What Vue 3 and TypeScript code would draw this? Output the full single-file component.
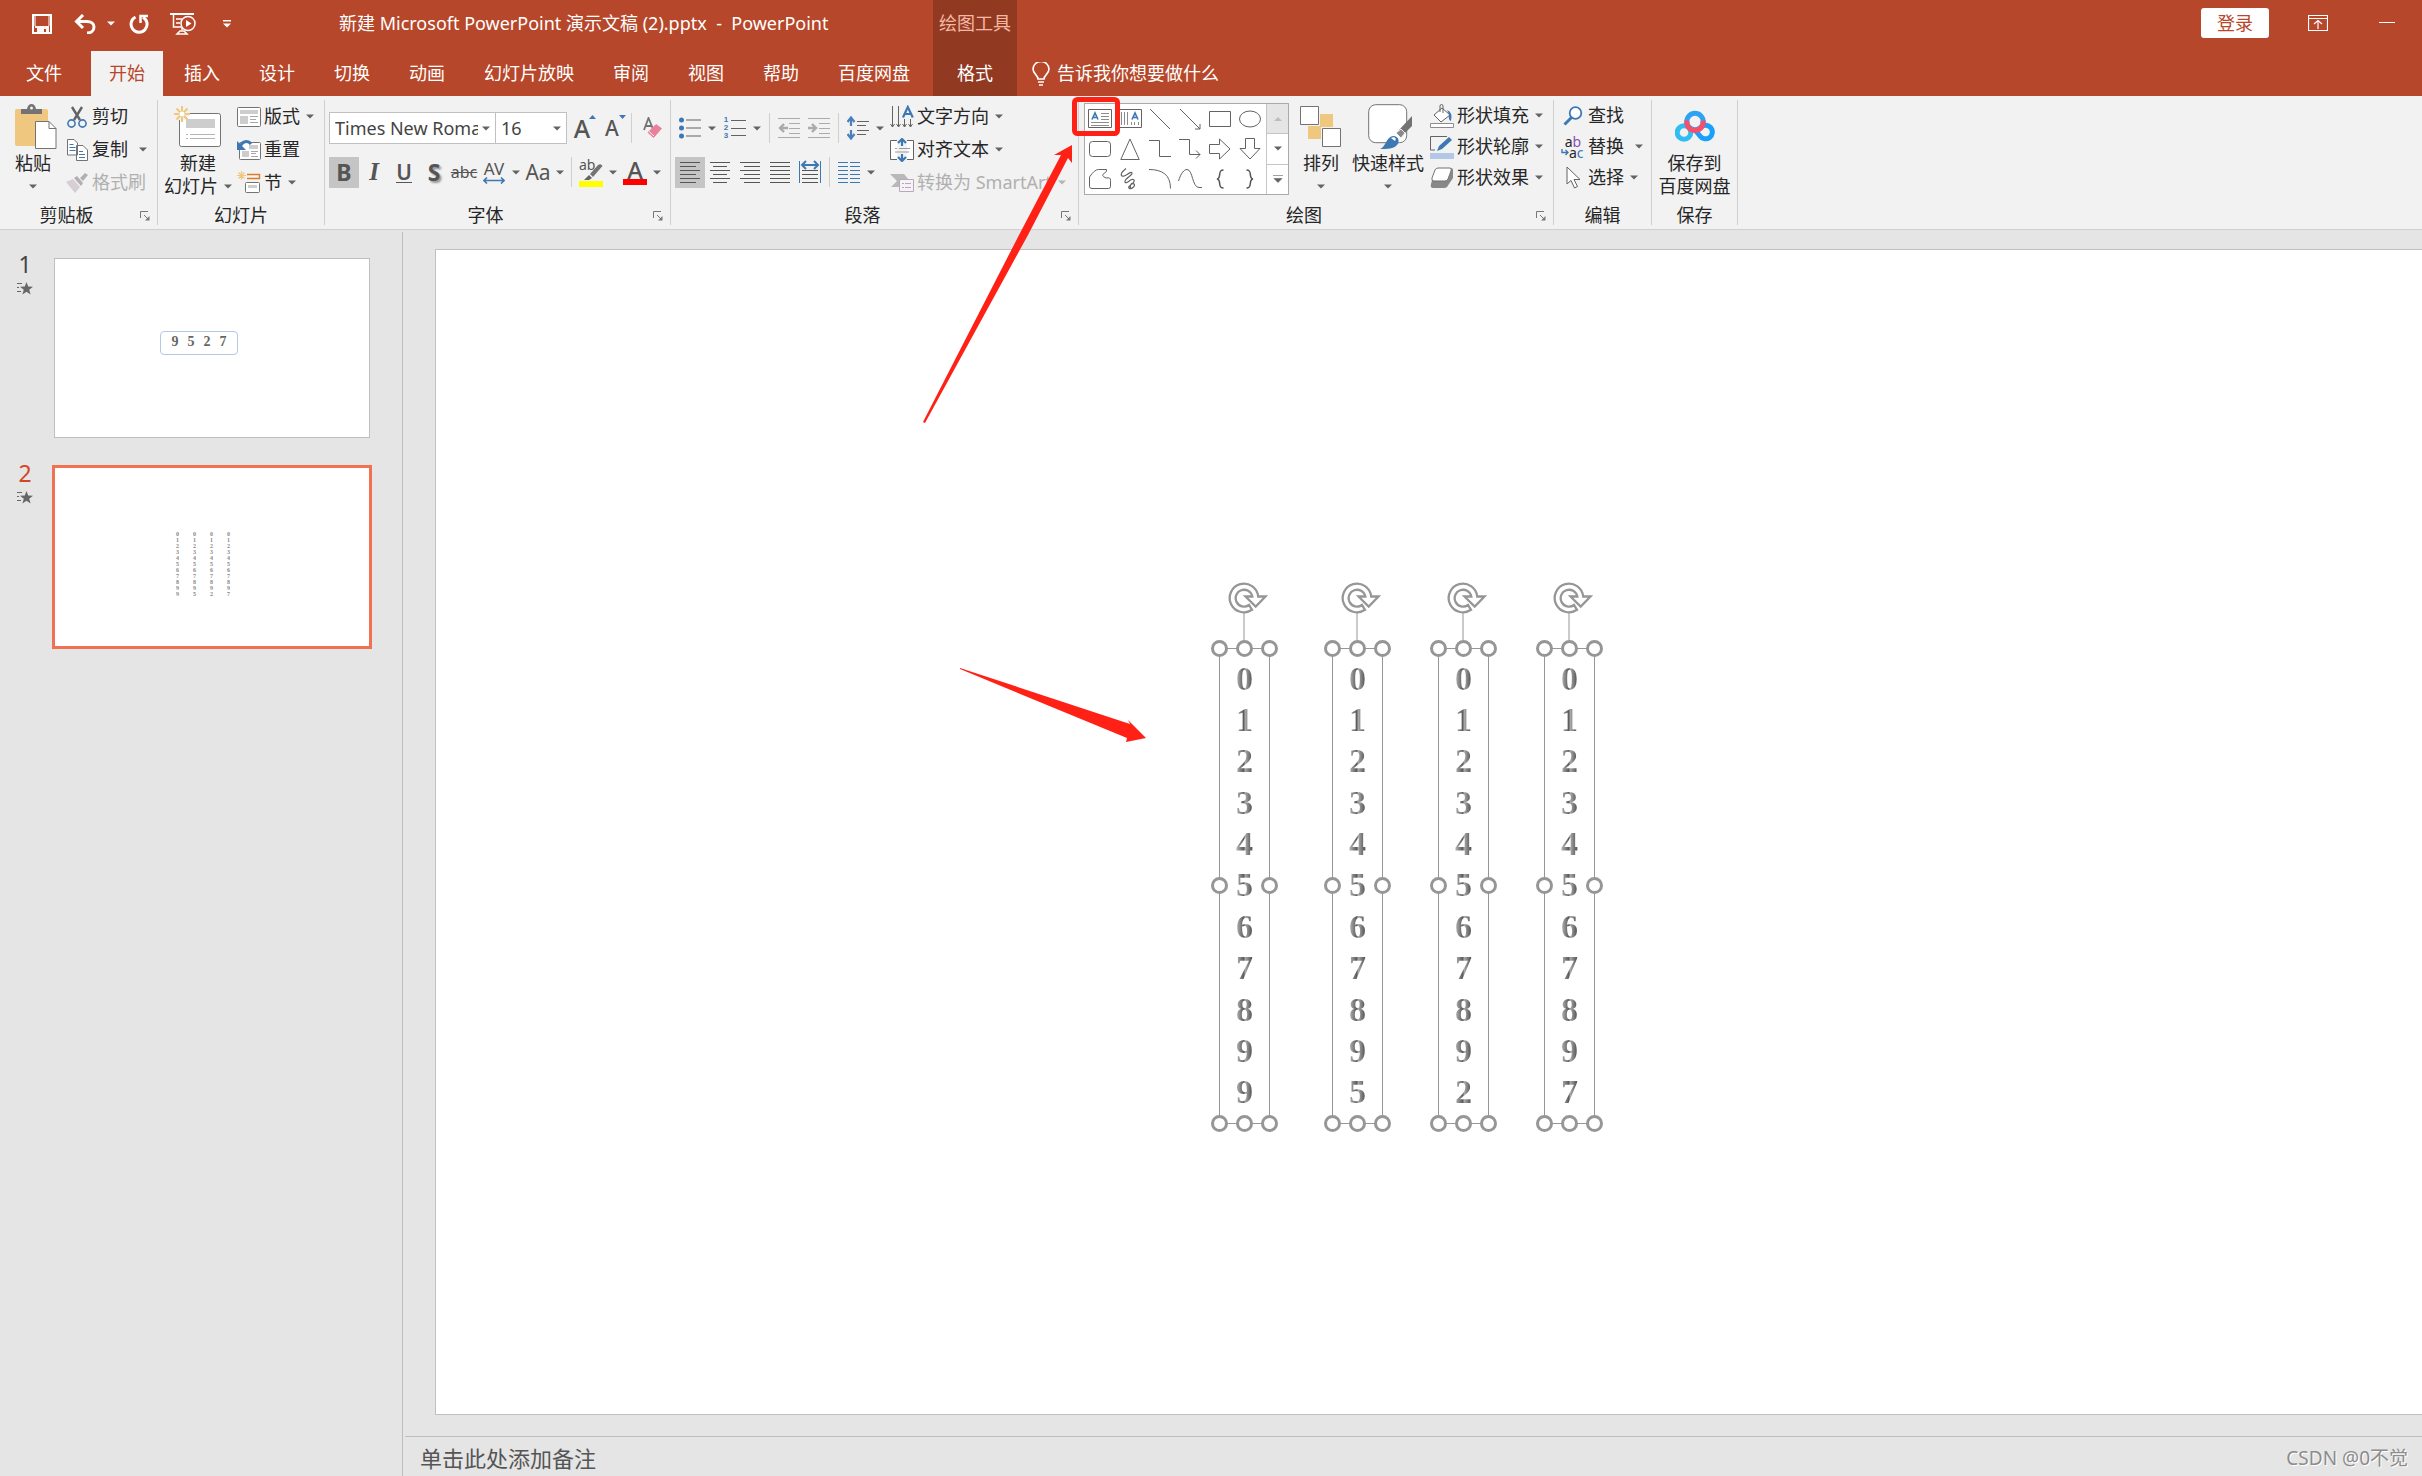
<script setup lang="ts">
import { h, ref } from 'vue'

interface DigitBox {
  left: number
  digits: string[]
}

const tabs = ['开始', '插入', '设计', '切换', '动画', '幻灯片放映', '审阅', '视图', '帮助', '百度网盘']
const activeTab = ref('开始')
const fontName = ref('Times New Roman')
const fontSize = ref('16')
const activeSlide = ref(2)

const base = ['0', '1', '2', '3', '4', '5', '6', '7', '8', '9']
const boxes: DigitBox[] = [
  { left: 783, digits: [...base, '9'] },
  { left: 896, digits: [...base, '5'] },
  { left: 1002, digits: [...base, '2'] },
  { left: 1108, digits: [...base, '7'] },
]
const handles = ['tl', 'tc', 'tr', 'ml', 'mr', 'bl', 'bc', 'br']

const Caret = (props: { color?: string }) =>
  h('svg', { width: 8, height: 5, viewBox: '0 0 8 5', 'aria-hidden': 'true', style: 'flex:none' }, [
    h('path', { d: 'M0 .5h8L4 4.5z', fill: props.color ?? '#636363' }),
  ])
Caret.props = ['color']

const Launcher = () =>
  h('svg', { width: 10, height: 10, viewBox: '0 0 10 10', fill: 'none', stroke: '#777', 'aria-hidden': 'true' }, [
    h('path', { d: 'M.5 7V.5H8M4 4l4 4' }),
    h('path', { d: 'M9.500 5v4.500H5z', fill: '#777', stroke: 'none' }),
  ])

const Star = () =>
  h('svg', { width: 16, height: 14, viewBox: '0 0 16 14', 'aria-hidden': 'true' }, [
    h('path', { d: 'M9.500 0l1.700 4.600 4.800.2-3.800 3 1.400 4.700-4.100-2.700-4.100 2.700 1.400-4.700-3.800-3 4.800-.2z', fill: '#666' }),
    h('path', { d: 'M0 1.500h5M0 5.500h2M0 9.500h4', stroke: '#666' }),
  ])
</script>

<template>
  <div class="app">
    <header class="header">
      <div class="title-row">
        <div class="qat">
          <button class="q q-save" aria-label="保存">
            <svg width="20" height="20" viewBox="0 0 20 20"><path d="M1 1h18v18H1z" fill="none" stroke="#fff" stroke-width="2" /><path d="M3 12h14v7h-3v-4h-2v4H5v-5H3z" fill="#fff" opacity=".95" /><path d="M2 1v11h2V2h12v10h2V1z" fill="#fff" opacity=".5" /></svg>
          </button>
          <button class="q q-undo" aria-label="撤消">
            <svg width="22" height="20" viewBox="0 0 22 20" fill="none" stroke="#fff" stroke-width="3"><path d="M9 1L2.500 7.500 9 14M3 7.500h10c4 0 7 2 7 5.500s-3 6-7 6" /></svg>
          </button>
          <button class="q q-drop" aria-label="撤消选项"><Caret color="#fff" /></button>
          <button class="q q-redo" aria-label="重复">
            <svg width="20" height="20" viewBox="0 0 20 20" fill="none" stroke="#fff" stroke-width="3"><path d="M6.500 3A8 8 0 1 0 14 3.200" /><path d="M11.500 9V2H19" stroke-width="2.500" /></svg>
          </button>
          <button class="q q-show" aria-label="从头开始">
            <svg width="26" height="22" viewBox="0 0 26 22" fill="none" stroke="#fff" stroke-width="1.500"><path d="M0 1h24" stroke-width="2" /><path d="M3.500 1v13H11M6 6h6M6 10h4M12 14v3M7 21l3-3h4l3 3z" /><circle cx="18" cy="10.500" r="7" /><path d="M16 7l5.500 3.500L16 14z" fill="#fff" stroke="none" /></svg>
          </button>
          <button class="q q-more" aria-label="自定义快速访问工具栏">
            <svg width="8" height="8" viewBox="0 0 8 8" fill="#fff"><path d="M0 0h8v1.500H0zM0 3.500h8l-4 4z" /></svg>
          </button>
        </div>
        <h1 class="doc-title">新建 Microsoft PowerPoint 演示文稿 (2).pptx &nbsp;-&nbsp; PowerPoint</h1>
        <div class="context-title">绘图工具</div>
        <div class="window-tools">
          <button class="login">登录</button>
          <button class="win-btn" aria-label="功能区显示选项">
            <svg width="20" height="16" viewBox="0 0 20 16" fill="none" stroke="#fff"><path d="M.5.5h19v15H.5zM.5 3.500h19M10 14V5.500M6 9l4-3.500L14 9" stroke-width="1.200" /></svg>
          </button>
          <button class="win-btn" aria-label="最小化"><svg width="16" height="2" viewBox="0 0 16 2"><path d="M0 .5h16" stroke="#fff" /></svg></button>
        </div>
      </div>
      <nav class="tabs">
        <button class="tab file">文件</button>
        <button v-for="t in tabs" :key="t" class="tab" :class="{ active: t === activeTab }" @click="activeTab = t">{{ t }}</button>
        <button class="tab format">格式</button>
        <label class="tell">
          <svg width="18" height="24" viewBox="0 0 18 24" fill="none" stroke="#fff" stroke-width="1.600"><path d="M6 17c0-4-5-5-5-10a7.500 7 0 0 1 16 0c0 5-5 6-5 10zM6 20h6M7 23h4" /></svg>
          <input type="text" placeholder="告诉我你想要做什么" aria-label="告诉我你想要做什么" />
        </label>
      </nav>
    </header>

    <div class="ribbon">
      <section class="group g-clip">
        <div class="body">
          <button class="big">
            <span class="pic">
              <svg width="42" height="46" viewBox="0 0 42 46"><path d="M2 5h29q2 0 2 2v33q0 2-2 2H2q-2 0-2-2V7q0-2 2-2z" fill="#efc77f" /><path d="M6 5h6q1-5 4.500-5T21 5h6v5H6z" fill="#737373" /><circle cx="16.500" cy="4" r="1.500" fill="#f2f2f2" /><path d="M20.500 17.500H34l7 7v20H20.500z" fill="#fff" stroke="#737373" /><path d="M34 17.500v7h7" fill="none" stroke="#737373" /></svg>
            </span>
            <span>粘贴</span><span class="ln"><Caret /></span>
          </button>
          <div class="list">
            <button class="cmd">
              <span class="ico"><svg width="20" height="22" viewBox="0 0 20 22" fill="none"><path d="M5 1l8 13M15 1L7 14" stroke="#636363" stroke-width="2.400" /><circle cx="4.500" cy="17.500" r="3.600" stroke="#3e78b3" stroke-width="1.600" /><circle cx="15.500" cy="17.500" r="3.600" stroke="#3e78b3" stroke-width="1.600" /></svg></span>剪切
            </button>
            <button class="cmd wide">
              <span class="ico"><svg width="21" height="22" viewBox="0 0 21 22" fill="#fff" stroke="#737373"><path d="M.5.5H7L10.500 4v12H.5zM9.500 6.500H16l4.500 4.500v10.500h-11z" /><path d="M2.500 5.500h4M2.500 8.500h6M2.500 11.500h6M12 12.500h4M12 15.500h6M12 18.500h6" stroke="#3e78b3" /></svg></span>复制<Caret />
            </button>
            <button class="cmd off" disabled>
              <span class="ico"><svg width="22" height="20" viewBox="0 0 22 20"><path d="M0 9l7-3 7 8-5 6z" fill="#d5ced5" /><path d="M8 5l3-2 6 7-2 3zM14 5l5-5 3 2-5 6z" fill="#b0b0b0" /></svg></span>格式刷
            </button>
          </div>
        </div>
        <footer class="foot"><span>剪贴板</span><button class="launch" aria-label="剪贴板选项"><Launcher /></button></footer>
      </section>

      <section class="group g-slides">
        <div class="body">
          <button class="big">
            <span class="pic">
              <svg width="48" height="42" viewBox="0 0 48 42"><rect x="5.500" y="7.500" width="41" height="33" rx="2" fill="#fff" stroke="#737373" /><path d="M12 13h29v9H12z" fill="#cdcdcd" /><path d="M12 28.500h2M16 28.500h25M12 32.500h2M16 32.500h25" stroke="#b5b5b5" /><circle cx="8" cy="8" r="6.500" fill="#f2f2f2" /><path d="M8 0v16M0 8h16M2.500 2.500l11 11M13.500 2.500l-11 11" stroke="#efc77f" stroke-width="2" /><circle cx="8" cy="8" r="2.500" fill="#fff" /></svg>
            </span>
            <span>新建</span><span class="ln">幻灯片<Caret /></span>
          </button>
          <div class="list">
            <button class="cmd">
              <span class="ico"><svg width="24" height="20" viewBox="0 0 24 20"><rect x=".5" y=".5" width="23" height="19" rx="1" fill="#fff" stroke="#737373" /><path d="M3 3h18v4H3zM3 9h8v8H3z" fill="#cdcdcd" /><path d="M13 9.500h8M13 12.500h6M13 15.500h8" stroke="#a8a8a8" /></svg></span>版式<Caret />
            </button>
            <button class="cmd">
              <span class="ico"><svg width="24" height="20" viewBox="0 0 24 20"><rect x="2.500" y="2.500" width="21" height="17" rx="1" fill="#fff" stroke="#737373" /><path d="M12 5h9v4h-9zM5 11h7v6H5z" fill="#cdcdcd" /><path d="M14 11.500h7M14 13.500h5M14 16.500h7" stroke="#a8a8a8" /><path d="M3 7C5 1 11 0 14 4" fill="none" stroke="#3e78b3" stroke-width="3" /><path d="M0 1v9h9z" fill="#3e78b3" /></svg></span>重置
            </button>
            <button class="cmd">
              <span class="ico"><svg width="24" height="23" viewBox="0 0 24 23" fill="none"><path d="M4.500 0v9M0 4.500h9M1.500 1.500l6 6M7.500 1.500l-6 6" stroke="#efc77f" stroke-width="1.200" /><path d="M10 3.500h12.500v4H10" stroke="#e07b28" stroke-width="1.400" /><rect x="8.500" y="11.500" width="14" height="10" rx="1" fill="#fff" stroke="#737373" /><path d="M11 14h9v3h-9z" fill="#cdcdcd" /></svg></span>节<Caret />
            </button>
          </div>
        </div>
        <footer class="foot"><span>幻灯片</span></footer>
      </section>

      <section class="group g-font">
        <div class="body rows">
          <div class="row">
            <label class="combo name"><select v-model="fontName" aria-label="字体"><option>Times New Roman</option><option>Arial</option></select><Caret /></label>
            <label class="combo size"><select v-model="fontSize" aria-label="字号"><option>16</option><option>18</option></select><Caret /></label>
            <button class="tool" aria-label="增大字号"><span class="ga">A</span><svg class="mark" width="7" height="4" viewBox="0 0 7 4"><path d="M0 4h7L3.500 0z" fill="#3e78b3" /></svg></button>
            <button class="tool" aria-label="减小字号"><span class="sa">A</span><svg class="mark" width="7" height="4" viewBox="0 0 7 4"><path d="M0 0h7L3.500 4z" fill="#3e78b3" /></svg></button>
            <i class="sep"></i>
            <button class="tool clear" aria-label="清除所有格式">
              <svg width="20" height="22" viewBox="0 0 20 22"><path d="M1 13L5.500 1 10 12M2.500 9h6" fill="none" stroke="#737373" stroke-width="1.800" /><path d="M13 7.500l5.500 4-8 9-5.500-5z" fill="#e8829b" stroke="#e8829b" stroke-linejoin="round" /><path d="M6 14.500l5 4.500" stroke="#f2f2f2" /></svg>
            </button>
          </div>
          <div class="row">
            <button class="tool on"><b class="fb">B</b></button>
            <button class="tool"><span class="fi">I</span></button>
            <button class="tool"><span class="fu">U</span></button>
            <button class="tool"><b class="fs">S</b></button>
            <button class="tool"><s class="fx">abc</s></button>
            <button class="tool split"><span class="half av">AV<svg width="22" height="7" viewBox="0 0 22 7" fill="none" stroke="#3e78b3" stroke-width="1.600"><path d="M1 3.500h20M4 .5l-3 3 3 3M18 .5l3 3-3 3" /></svg></span><Caret /></button>
            <button class="tool split"><span class="half aa">Aa</span><Caret /></button>
            <i class="sep"></i>
            <button class="tool split" aria-label="文本突出显示颜色">
              <span class="half hl"><span class="ab">ab</span><svg width="24" height="24" viewBox="0 0 24 24"><path d="M11 11l8-9q3-2 4.500 1L14 14z" fill="#737373" /><path d="M10 12l3 3-3 2H5z" fill="#636363" /><path d="M0 18h24v6H0z" fill="#ff0" /></svg></span><Caret />
            </button>
            <button class="tool split"><span class="half fc">A</span><Caret /></button>
          </div>
        </div>
        <footer class="foot"><span>字体</span><button class="launch" aria-label="字体选项"><Launcher /></button></footer>
      </section>

      <section class="group g-para">
        <div class="body">
          <div class="rows">
            <div class="row">
              <button class="tool split" aria-label="项目符号"><span class="half"><svg width="22" height="22" viewBox="0 0 22 22"><g fill="#3e78b3"><circle cx="2.500" cy="3" r="2.500" /><circle cx="2.500" cy="11" r="2.500" /><circle cx="2.500" cy="19" r="2.500" /></g><path d="M7 3h15M7 11h15M7 19h15" stroke="#636363" /></svg></span><Caret /></button>
              <button class="tool split" aria-label="编号"><span class="half nums"><span class="n"><span>1</span><span>2</span><span>3</span></span><svg width="15" height="22" viewBox="0 0 15 22"><path d="M0 3.500h15M0 11.500h15M0 18.500h15" stroke="#636363" /></svg></span><Caret /></button>
              <i class="sep"></i>
              <button class="tool" disabled aria-label="降低列表级别"><svg width="22" height="22" viewBox="0 0 22 22" fill="none" stroke="#ababab"><path d="M0 1.500h22M11 6.500h11M11 11.500h11M11 16.500h11M0 20.500h22" /><path d="M10 11H2M6 7l-4 4 4 4" stroke-width="2.400" /></svg></button>
              <button class="tool" disabled aria-label="提高列表级别"><svg width="22" height="22" viewBox="0 0 22 22" fill="none" stroke="#ababab"><path d="M0 1.500h22M11 6.500h11M11 11.500h11M11 16.500h11M0 20.500h22" /><path d="M0 11h8M4 7l4 4-4 4" stroke-width="2.400" /></svg></button>
              <i class="sep"></i>
              <button class="tool split" aria-label="行距"><span class="half"><svg width="22" height="24" viewBox="0 0 22 24" fill="none"><path d="M4 3v7M4 14v7M.5 6L4 1.500 7.500 6M.5 18L4 22.500 7.500 18" stroke="#4a7ebf" stroke-width="2.200" /><path d="M10 5.500h12M10 9.500h9M10 14.500h12M10 18.500h9" stroke="#636363" /></svg></span><Caret /></button>
            </div>
            <div class="row">
              <button class="tool on" aria-label="左对齐"><svg width="20" height="22" viewBox="0 0 20 22" stroke="#555"><path d="M0 1.500h20M0 5.500h16M0 9.500h20M0 13.500h16M0 17.500h20M0 21.500h16" /></svg></button>
              <button class="tool" aria-label="居中"><svg width="20" height="22" viewBox="0 0 20 22" stroke="#555"><path d="M0 1.500h20M3 5.500h14M0 9.500h20M3 13.500h14M0 17.500h20M3 21.500h14" /></svg></button>
              <button class="tool" aria-label="右对齐"><svg width="20" height="22" viewBox="0 0 20 22" stroke="#555"><path d="M0 1.500h20M4 5.500h16M0 9.500h20M4 13.500h16M0 17.500h20M4 21.500h16" /></svg></button>
              <button class="tool" aria-label="两端对齐"><svg width="20" height="22" viewBox="0 0 20 22" stroke="#555"><path d="M0 1.500h20M0 5.500h20M0 9.500h20M0 13.500h20M0 17.500h20M0 21.500h20" /></svg></button>
              <button class="tool" aria-label="分散对齐"><svg width="22" height="24" viewBox="0 0 22 24" fill="none"><path d="M.5 1v22M21.500 1v22" stroke="#3e78b3" /><path d="M3 5h16M7 1L3 5l4 4M15 1l4 4-4 4" stroke="#3e78b3" stroke-width="2" /><path d="M3 10.500h16M3 14.500h16M3 18.500h16M3 22.500h16" stroke="#555" /></svg></button>
              <i class="sep"></i>
              <button class="tool split" aria-label="分栏"><span class="half"><svg width="22" height="22" viewBox="0 0 22 22" stroke="#3e78b3"><path d="M0 1.500h10M12 1.500h10M0 5.500h10M12 5.500h10M0 9.500h10M12 9.500h10M0 13.500h10M12 13.500h10M0 17.500h10M12 17.500h10M0 21.500h10M12 21.500h10" /></svg></span><Caret /></button>
            </div>
          </div>
          <div class="list">
            <button class="cmd">
              <span class="ico"><svg width="24" height="24" viewBox="0 0 24 24" fill="none" stroke="#636363"><path d="M2.500 1v21M8.500 1v21M14.500 14v8M20.500 14v8M.5 19l2 3 2-3M6.500 19l2 3 2-3M12.500 19l2 3 2-3M18.500 19l2 3 2-3" /><path d="M13 12.500L17.800 2l5 10.500M15 9h6" stroke="#3e78b3" stroke-width="2.200" /></svg></span>文字方向<Caret />
            </button>
            <button class="cmd">
              <span class="ico"><svg width="24" height="24" viewBox="0 0 24 24" fill="none"><path d="M7 2.500H.5v19H7M17 2.500h6.500v19H17" fill="#fff" stroke="#636363" /><path d="M5 10.500h2M9 10.500h11M5 14h14" stroke="#999" /><path d="M12 2v6M12 22v-6M8 5l4-4 4 4M8 19l4 4 4-4" stroke="#3e78b3" stroke-width="2.200" /></svg></span>对齐文本<Caret />
            </button>
            <button class="cmd off" disabled>
              <span class="ico"><svg width="24" height="20" viewBox="0 0 24 20"><path d="M0 1h14l5 6h-7l-3 7H1l6-6z" fill="#b8b8b8" /><path d="M9.500 6.500h14v12h-14z" fill="#f7f2f7" stroke="#b8a8b8" /><path d="M12 10.500h2M15 10.500h6M12 14.500h2M15 14.500h6" stroke="#b8a8b8" /></svg></span>转换为 SmartArt<Caret color="#b4b4b4" />
            </button>
          </div>
        </div>
        <footer class="foot"><span>段落</span><button class="launch" aria-label="段落选项"><Launcher /></button></footer>
      </section>

      <section class="group g-draw">
        <div class="body">
          <div class="gallery">
            <div class="shapes">
              <button aria-label="横排文本框"><svg width="24" height="20" viewBox="0 0 24 20" fill="none" stroke="#636363"><path d="M.5.5h23v18H.5z" fill="#fff" /><path d="M13 4.500h8M13 7.500h8M13 10.500h8M3 13.500h18M3 16.500h18" stroke="#8c8c8c" /><path d="M4 10.500L7 4l3 6.500M5 8.500h4" stroke="#3e78b3" stroke-width="1.600" /></svg></button>
              <button aria-label="竖排文本框"><svg width="24" height="20" viewBox="0 0 24 20" fill="none" stroke="#636363"><path d="M.5.5h23v18H.5z" fill="#fff" /><path d="M3.500 3v13M6.500 3v13M9.500 3v13M13.500 13v3M16.500 13v3M20.500 13v3" stroke="#8c8c8c" /><path d="M14 10.500L17 4l3 6.500M15 8.500h4" stroke="#3e78b3" stroke-width="1.600" /></svg></button>
              <button aria-label="直线"><svg width="22" height="22" viewBox="0 0 22 22" stroke="#636363"><path d="M1 1l20 20" /></svg></button>
              <button aria-label="箭头"><svg width="22" height="22" viewBox="0 0 22 22" fill="none" stroke="#636363"><path d="M1 1l20 20M21 16v5h-5" /></svg></button>
              <button aria-label="矩形"><svg width="22" height="16" viewBox="0 0 22 16" fill="none" stroke="#636363"><path d="M.5.5h21v15H.5z" /></svg></button>
              <button aria-label="椭圆"><svg width="22" height="18" viewBox="0 0 22 18" fill="none" stroke="#636363"><ellipse cx="11" cy="9" rx="10.500" ry="8" /></svg></button>
              <button aria-label="圆角矩形"><svg width="22" height="16" viewBox="0 0 22 16" fill="none" stroke="#636363"><rect x=".5" y=".5" width="21" height="15" rx="3" /></svg></button>
              <button aria-label="三角形"><svg width="20" height="22" viewBox="0 0 20 22" fill="none" stroke="#636363"><path d="M10 1l9.200 20.500H.8z" /></svg></button>
              <button aria-label="肘形连接符"><svg width="22" height="18" viewBox="0 0 22 18" fill="none" stroke="#636363"><path d="M0 .5h10.500v16H22" /></svg></button>
              <button aria-label="肘形箭头"><svg width="22" height="20" viewBox="0 0 22 20" fill="none" stroke="#636363"><path d="M0 .5h10.500v15H21M17 11.500l4 4-4 4" /></svg></button>
              <button aria-label="右箭头"><svg width="22" height="22" viewBox="0 0 22 22" fill="none" stroke="#636363"><path d="M.5 6.500h10V1L21 11 10.500 21v-5.500H.5z" /></svg></button>
              <button aria-label="下箭头"><svg width="22" height="22" viewBox="0 0 22 22" fill="none" stroke="#636363"><path d="M6.500.5v10H1L11 21l10-10.500h-5.500V.5z" /></svg></button>
              <button aria-label="任意多边形"><svg width="22" height="20" viewBox="0 0 22 20" fill="none" stroke="#636363"><path d="M.5 17V8q5-7.500 9-7.500h8q1 2-2.500 4t2 4.500q5-1 4.500 2.500v6q0 2-2 2H3q-2.500 0-2.500-2z" /></svg></button>
              <button aria-label="自由曲线"><svg width="20" height="22" viewBox="0 0 20 22" fill="none" stroke="#636363" stroke-width="1.200"><path d="M6 .5C-1 6 1 9 4 8s7-5 8-3-8 6-7 9 7-5 9-2-7 6-5 8 7-2 5-4-5 1-3 5" /></svg></button>
              <button aria-label="弧形"><svg width="22" height="20" viewBox="0 0 22 20" fill="none" stroke="#636363"><path d="M0 .5c13 0 21.500 5 21.500 19" /></svg></button>
              <button aria-label="曲线"><svg width="24" height="20" viewBox="0 0 24 20" fill="none" stroke="#636363"><path d="M.5 12C3 4 6 .5 9 .5c6 0 5 18 12 18h3" /></svg></button>
              <button aria-label="左大括号"><svg width="8" height="20" viewBox="0 0 8 20" fill="none" stroke="#555" stroke-width="1.500"><path d="M7.500 1C1 1 6 9 1 10c5 1 0 9 6.500 9" /></svg></button>
              <button aria-label="右大括号"><svg width="8" height="20" viewBox="0 0 8 20" fill="none" stroke="#555" stroke-width="1.500"><path d="M.5 1C7 1 2 9 7 10c-5 1 0 9-6.500 9" /></svg></button>
            </div>
            <div class="scroller">
              <button class="dim" aria-label="上一行"><svg width="8" height="4" viewBox="0 0 8 4"><path d="M0 4h8L4 0z" fill="#bdbdbd" /></svg></button>
              <button aria-label="下一行"><Caret /></button>
              <button aria-label="其他"><svg width="10" height="8" viewBox="0 0 10 8"><path d="M0 .5h10M1 3.500h8l-4 4z" fill="#636363" stroke="#636363" stroke-width=".6" /></svg></button>
            </div>
          </div>
          <button class="big arrange">
            <span class="pic"><svg width="42" height="42" viewBox="0 0 42 42"><path d="M20 8h13v13H20zM8 20h13v13H8z" fill="#efc77f" /><path d="M.5.5h18v18H.5zM22.500 22.500h18v18h-18z" fill="#fff" stroke="#737373" /></svg></span>
            <span>排列</span><span class="ln"><Caret /></span>
          </button>
          <button class="big quick">
            <span class="pic"><svg width="46" height="46" viewBox="0 0 46 46"><rect x=".7" y=".7" width="38" height="38" rx="7" fill="#fff" stroke="#737373" /><path d="M44 12v10l-8 8-5-4z" fill="#737373" /><path d="M28 29l5-4 4 4-4 5z" fill="#8a8a8a" stroke="#f2f2f2" /><path d="M12 45c6-2 6-12 13-13 6 0 7 6 4 9-3 4-10 4-17 4z" fill="#3e78b3" /><path d="M23 34c3-2 6 0 4 3z" fill="#fff" /></svg></span>
            <span>快速样式</span><span class="ln"><Caret /></span>
          </button>
          <div class="list tight">
            <button class="cmd">
              <span class="ico"><svg width="24" height="24" viewBox="0 0 24 24"><path d="M12 4l8 7-9 7-7-7z" fill="#fff" stroke="#636363" /><path d="M10 8V2q0-1.500 1.500-1.500T13 2v7" fill="none" stroke="#636363" /><path d="M17 6q6 2 4 11-3-1-2-7z" fill="#3e78b3" /><path d="M.5 19.500h23v4H.5z" fill="#fff" stroke="#8c8c8c" /></svg></span>形状填充<Caret />
            </button>
            <button class="cmd">
              <span class="ico"><svg width="24" height="24" viewBox="0 0 24 24"><path d="M17 1.500H.5V15H5" fill="none" stroke="#636363" /><path d="M7 16l2-5L19 2l3 3-10 9z" fill="#3e78b3" /><path d="M0 18h24v6H0z" fill="#b4c7e7" /></svg></span>形状轮廓<Caret />
            </button>
            <button class="cmd">
              <span class="ico"><svg width="24" height="22" viewBox="0 0 24 22"><path d="M8 1h13q2 0 2 2v8l-6 9q-1 1-3 1H3q-3 0-2-4L5 3q1-2 3-2z" fill="#888" /><path d="M8 1h12q2 0 1 3l-3 8q-1 2-3 2H4q-3 0-2-3l3-8q1-2 3-2z" fill="#fff" stroke="#737373" /></svg></span>形状效果<Caret />
            </button>
          </div>
        </div>
        <footer class="foot"><span>绘图</span><button class="launch" aria-label="绘图选项"><Launcher /></button></footer>
      </section>

      <section class="group g-edit">
        <div class="body">
          <div class="list tight">
            <button class="cmd">
              <span class="ico"><svg width="20" height="20" viewBox="0 0 20 20" fill="none" stroke="#3e78b3"><circle cx="12.500" cy="7" r="5.800" fill="#fff" stroke-width="1.800" /><path d="M8.500 11.500L1.500 18.500" stroke-width="3" /></svg></span>查找
            </button>
            <button class="cmd wide">
              <span class="ico rep"><span>a<em>b</em></span><span class="r2"><svg width="8" height="7" viewBox="0 0 8 7" fill="none" stroke="#3e78b3" stroke-width="1.400"><path d="M1 0v3.500h6M4.500 1L7 3.500 4.500 6" /></svg>a<u>c</u></span></span>替换<Caret />
            </button>
            <button class="cmd">
              <span class="ico"><svg width="15" height="23" viewBox="0 0 15 23"><path d="M1 1v17l4-3.500 3.500 7.500 3-1.500L8 13.500h6z" fill="#fff" stroke="#636363" /></svg></span>选择<Caret />
            </button>
          </div>
        </div>
        <footer class="foot"><span>编辑</span></footer>
      </section>

      <section class="group g-save">
        <div class="body">
          <button class="big">
            <span class="pic">
              <svg width="40" height="34" viewBox="0 0 40 34" fill="none" stroke-width="5">
                <circle cx="9" cy="22.500" r="6.800" stroke="#2fbdf2" />
                <path d="M26 17a6.800 6.800 0 1 1-1 9L20 20" stroke="#18a0fa" />
                <circle cx="20" cy="11.500" r="8.200" stroke="#2ea3f4" />
                <path d="M12 10.500a8.200 8.200 0 1 0 16 0" stroke="#f4506c" />
              </svg>
            </span>
            <span>保存到</span><span class="ln">百度网盘</span>
          </button>
        </div>
        <footer class="foot"><span>保存</span></footer>
      </section>
    </div>

    <div class="work">
      <aside class="slides">
        <div class="thumb-row">
          <div class="no"><span>1</span><Star /></div>
          <button class="thumb" :class="{ sel: activeSlide === 1 }" aria-label="幻灯片 1" @click="activeSlide = 1">
            <span class="counter"><b>9</b><b>5</b><b>2</b><b>7</b></span>
          </button>
        </div>
        <div class="thumb-row cur">
          <div class="no"><span>2</span><Star /></div>
          <button class="thumb" :class="{ sel: activeSlide === 2 }" aria-label="幻灯片 2" @click="activeSlide = 2">
            <span class="reels"><span v-for="(b, i) in boxes" :key="i" class="reel"><b v-for="(d, j) in b.digits" :key="j">{{ d }}</b></span></span>
          </button>
        </div>
      </aside>
      <main class="editor">
        <div class="stage">
          <div class="slide">
            <div v-for="(b, i) in boxes" :key="i" class="box" :style="{ left: b.left + 'px' }">
              <svg class="rotate" width="40" height="60" viewBox="-16 -16 40 60" fill="#fff" stroke="#969696"><path d="M0 14v28" /><path d="M14.200-1.500A14.300 14.300 0 1 0 8 11.800L5 7A8.400 8.400 0 1 1 8.300-1.500H1.500L11.700 8.500 21.500-1.500z" stroke-width="2.300" /></svg>
              <div v-for="(d, j) in b.digits" :key="j" class="digit"><span>{{ d }}</span></div>
              <i v-for="k in handles" :key="k" class="handle" :class="k"></i>
            </div>
          </div>
        </div>
        <div class="notes">
          <input type="text" placeholder="单击此处添加备注" aria-label="备注" />
          <span class="credit">CSDN @0不觉</span>
        </div>
      </main>
    </div>

    <svg class="marks" width="1160" height="760" viewBox="0 0 1160 760" fill="#ff2116" aria-hidden="true">
      <rect x="1074.500" y="99.500" width="43" height="34" rx="3" fill="none" stroke="#ff2116" stroke-width="5" />
      <path d="M923 422l96-187 42-80-7 0 18-10v18l-4-5-40 77-103 188z" />
      <path d="M960 668l170 56-2-4 18 18-20 4 1-4-167-69z" />
    </svg>
  </div>
</template>

<style>
body {
  margin: 0;
  overflow: hidden;
}
</style>

<style scoped>
.app {
  position: relative;
  display: flex;
  flex-direction: column;
  min-height: 100vh;
  background: #e5e5e5;
  color: #262626;
  font: 18px/23px "Noto Sans", "Noto Sans CJK SC", sans-serif;
  overflow: hidden;
}
button,
input,
select {
  margin: 0;
  padding: 0;
  border: 0;
  background: none;
  color: inherit;
  font: inherit;
}
svg {
  display: block;
  flex: none;
}
.header {
  background: #b7472a;
  color: #fff;
}
.title-row {
  display: flex;
  height: 51px;
}
.qat {
  display: flex;
  align-items: center;
  width: 339px;
  height: 47px;
}
.q {
  display: flex;
  justify-content: center;
  align-items: center;
  height: 30px;
}
.q-save {
  width: 20px;
  margin-left: 32px;
}
.q-undo {
  width: 22px;
  margin-left: 22px;
}
.q-drop {
  width: 20px;
  margin-left: 5px;
}
.q-redo {
  width: 20px;
  margin-left: 8px;
}
.q-show {
  width: 26px;
  margin-left: 21px;
}
.q-more {
  width: 20px;
  margin-left: 21px;
}
.doc-title {
  width: 594px;
  margin: 0;
  font-size: 18px;
  font-weight: 400;
  line-height: 46px;
  white-space: nowrap;
}
.context-title {
  width: 84px;
  background: #923922;
  color: #f4b8a4;
  line-height: 46px;
  text-align: center;
}
.window-tools {
  display: flex;
  align-items: center;
  height: 46px;
  margin-left: auto;
  padding-right: 7px;
}
.login {
  width: 68px;
  height: 30px;
  margin-right: 21px;
  border-radius: 3px;
  background: #fff;
  color: #b7472a;
}
.win-btn {
  display: flex;
  justify-content: center;
  align-items: center;
  width: 56px;
  height: 30px;
}
.win-btn + .win-btn {
  margin-left: 13px;
}
.tabs {
  display: flex;
  height: 45px;
}
.tab {
  margin-right: 3px;
  padding: 0 18px;
}
.tab.file {
  margin: 0 11px 0 8px;
}
.tab.active {
  background: #f2f2f2;
  color: #b7472a;
}
.tab.format {
  width: 84px;
  margin: 0 15px 0 2px;
  background: #923922;
}
.tell {
  display: flex;
  align-items: center;
  gap: 7px;
}
.tell input {
  width: 240px;
}
.tell input::placeholder {
  color: #fff;
  opacity: 1;
}

.ribbon {
  display: flex;
  height: 133px;
  border-bottom: 1px solid #cfcfcf;
  background: #f2f2f2;
}
.group {
  display: flex;
  flex: none;
  flex-direction: column;
  box-sizing: border-box;
  height: 125px;
  margin: 4px 0;
  border-right: 1px solid #cfcfcf;
}
.body {
  display: flex;
  flex: 1;
  align-items: flex-start;
  min-height: 0;
}
.foot {
  display: flex;
  height: 19px;
  line-height: 19px;
  text-align: center;
}
.foot span {
  flex: 1;
}
.launch {
  display: flex;
  justify-content: center;
  align-items: center;
  width: 24px;
}
.big {
  display: flex;
  flex: none;
  flex-direction: column;
  align-items: center;
  padding-top: 2px;
}
.pic {
  display: flex;
  justify-content: center;
  align-items: center;
  height: 50px;
}
.ln {
  display: flex;
  gap: 6px;
  justify-content: center;
  align-items: center;
  height: 23px;
  white-space: nowrap;
}
.cmd {
  display: flex;
  align-items: center;
  height: 33px;
  white-space: pre;
}
.cmd > svg {
  margin-left: 6px;
}
.cmd.wide > svg {
  margin-left: 11px;
}
.cmd.off {
  color: #b0b0b0;
}
.tight .cmd {
  height: 31px;
}
.ico {
  display: flex;
  justify-content: center;
  width: 24px;
  margin-right: 3px;
}
.g-clip {
  width: 158px;
}
.g-clip .big {
  width: 58px;
  margin: 0 3px 0 4px;
}
.g-clip .pic {
  padding-left: 6px;
}
.g-slides {
  width: 167px;
}
.g-slides .big {
  width: 72px;
  margin: 0 3px 0 4px;
}
.g-font {
  width: 346px;
}
.g-para {
  width: 408px;
}
.g-para .rows {
  flex: none;
  width: 219px;
}
.g-draw {
  width: 475px;
}
.g-edit {
  width: 98px;
}
.g-edit .list {
  margin-left: 7px;
}
.g-save {
  width: 86px;
}
.g-save .big {
  width: 85px;
}

.rows {
  display: flex;
  flex-direction: column;
  gap: 12px;
  padding: 12px 0 0 4px;
  box-sizing: border-box;
}
.row {
  display: flex;
  align-items: center;
  height: 32px;
}
.tool {
  position: relative;
  display: flex;
  flex: none;
  justify-content: center;
  align-items: center;
  width: 30px;
  height: 31px;
  color: #555;
}
.tool.on {
  background: #c5c5c5;
}
.tool.clear {
  width: 34px;
}
.split {
  justify-content: flex-start;
  width: 45px;
}
.g-font .split {
  width: 44px;
}
.half {
  display: flex;
  justify-content: center;
  align-items: center;
  width: 30px;
  height: 31px;
  margin-right: 3px;
}
.sep {
  width: 1px;
  height: 30px;
  margin: 0 4px;
  background: #cfcfcf;
}
.combo {
  display: flex;
  align-items: center;
  box-sizing: border-box;
  height: 32px;
  padding-right: 5px;
  border: 1px solid #c0c0c0;
  background: #fff;
  color: #444;
}
.combo select {
  flex: 1;
  min-width: 0;
  height: 30px;
  margin: 0 4px 0 5px;
  appearance: none;
}
.combo.name {
  width: 167px;
}
.combo.size {
  width: 72px;
  margin-left: -1px;
}
.ga {
  font-size: 25px;
  font-weight: 500;
}
.sa {
  font-size: 21px;
  font-weight: 500;
}
.mark {
  position: absolute;
  top: 2px;
  right: 1px;
}
.fb,
.fs {
  font-size: 23px;
}
.fs {
  text-shadow: 2px 2px 2px #999;
}
.fi {
  font: italic 700 25px "Liberation Serif", serif;
}
.fu {
  border-bottom: 1px solid #555;
  font-size: 21px;
  font-weight: 600;
  line-height: 20px;
}
.fx {
  font-size: 16px;
}
.av {
  flex-direction: column;
  font-size: 17px;
  line-height: 17px;
}
.aa {
  font-size: 21px;
}
.hl {
  position: relative;
}
.ab {
  position: absolute;
  top: 0;
  left: 3px;
  font-size: 14px;
  line-height: 16px;
}
.hl svg {
  margin-top: 5px;
}
.fc {
  width: 24px;
  height: 26px;
  margin: 0 6px 0 3px;
  box-sizing: border-box;
  border-bottom: 6px solid #f00;
  font-size: 24px;
  font-weight: 500;
}
.nums {
  gap: 3px;
}
.n {
  display: flex;
  flex-direction: column;
  color: #3e78b3;
  font: 700 8px/8px "Liberation Sans", sans-serif;
}
.gallery {
  display: flex;
  flex: none;
  box-sizing: border-box;
  width: 205px;
  height: 92px;
  margin: 3px 0 0 5px;
  border: 1px solid #ababab;
  background: #fff;
}
.shapes {
  display: grid;
  flex: none;
  grid-template-columns: repeat(6, 30px);
  grid-template-rows: repeat(3, 30px);
}
.shapes button {
  display: flex;
  justify-content: center;
  align-items: center;
}
.scroller {
  display: flex;
  flex: 1;
  flex-direction: column;
  margin-left: 1px;
  border-left: 1px solid #c5c5c5;
}
.scroller button {
  display: flex;
  flex: 1;
  justify-content: center;
  align-items: center;
}
.scroller button + button {
  border-top: 1px solid #c5c5c5;
}
.scroller .dim {
  background: #e5e5e5;
}
.arrange {
  width: 56px;
  margin-left: 4px;
}
.quick {
  width: 76px;
  margin: 0 4px 0 1px;
}
.quick .pic {
  padding-left: 6px;
}
.rep {
  flex-direction: column;
  font-size: 14px;
  line-height: 11px;
}
.rep em {
  color: #8a4fb0;
  font-style: normal;
}
.rep u {
  color: #3e78b3;
  text-decoration: none;
}
.r2 {
  display: flex;
  align-items: center;
}

.work {
  display: flex;
  flex: 1;
}
.slides {
  box-sizing: border-box;
  width: 403px;
  margin-top: 2px;
  padding: 24px 0 0;
  border-right: 1px solid #bdbdbd;
}
.thumb-row {
  display: flex;
  align-items: flex-start;
  height: 209px;
}
.no {
  display: flex;
  flex-direction: column;
  gap: 10px;
  align-items: center;
  width: 50px;
  height: 40px;
  color: #444;
  font-size: 23px;
  line-height: 16px;
}
.cur .no {
  color: #d24726;
}
.thumb {
  display: flex;
  align-items: flex-start;
  box-sizing: border-box;
  width: 316px;
  height: 180px;
  margin: 2px 0 0 4px;
  border: 1px solid #bfbfbf;
  background: #fff;
}
.thumb.sel {
  width: 320px;
  height: 184px;
  margin: 0 0 0 2px;
  border: 3px solid #f07252;
}
.counter {
  display: flex;
  justify-content: center;
  gap: 9px;
  box-sizing: border-box;
  width: 78px;
  height: 24px;
  margin: 72px 0 0 105px;
  border: 1px solid #b4c7e7;
  border-radius: 4px;
  color: #666;
  font: 14px/20px "Liberation Serif", serif;
}
.reels {
  display: flex;
  gap: 14px;
  margin: 63px 0 0 121px;
  color: #888;
  font: 6px/6px "Liberation Serif", serif;
}
.reel {
  display: flex;
  flex-direction: column;
}
.editor {
  display: flex;
  flex: 1;
  flex-direction: column;
  min-width: 0;
}
.stage {
  display: flex;
  flex: 1;
  padding: 19px 0 21px 32px;
}
.slide {
  position: relative;
  flex: 1;
  border: 1px solid #c0c0c0;
  border-right: 0;
  background: #fff;
}
.box {
  position: absolute;
  top: 398px;
  display: flex;
  flex-direction: column;
  box-sizing: border-box;
  width: 51px;
  height: 476px;
  padding: 9px 0 10px;
  border: 1px solid #969696;
}
.digit {
  display: flex;
  flex: 1;
  justify-content: center;
  align-items: center;
  font: 700 34px/34px "Liberation Serif", "Times New Roman", serif;
}
.digit span {
  background: linear-gradient(90deg, #b0b0b0 5%, #5c5c5c 45%, #a8a8a8 55%, #5c5c5c 90%);
  background-clip: text;
  -webkit-background-clip: text;
  color: transparent;
}
.rotate {
  position: absolute;
  top: -67px;
  left: 8px;
}
.handle {
  position: absolute;
  box-sizing: border-box;
  width: 17px;
  height: 17px;
  margin: -9px;
  border: 3px solid #969696;
  border-radius: 50%;
  background: #fff;
}
.tl,
.tc,
.tr {
  top: 0;
}
.ml,
.mr {
  top: 50%;
}
.bl,
.bc,
.br {
  top: 100%;
  margin-top: -8px;
}
.tl,
.ml,
.bl {
  left: 0;
}
.tc,
.bc {
  left: 50%;
}
.tr,
.mr,
.br {
  left: 100%;
  margin-left: -8px;
}
.notes {
  display: flex;
  align-items: center;
  justify-content: space-between;
  height: 39px;
  margin-left: 2px;
  padding: 0 14px 0 15px;
  border-top: 1px solid #bdbdbd;
}
.notes input {
  flex: 1;
  height: 32px;
  margin-top: 2px;
  font-size: 22px;
}
.notes input::placeholder {
  color: #555;
  opacity: 1;
}
.credit {
  margin-top: 4px;
  color: #8c8c8c;
  font-size: 19px;
  text-shadow: 1px 1px #fff;
}
.marks {
  position: absolute;
  top: 0;
  left: 0;
  pointer-events: none;
}
</style>
